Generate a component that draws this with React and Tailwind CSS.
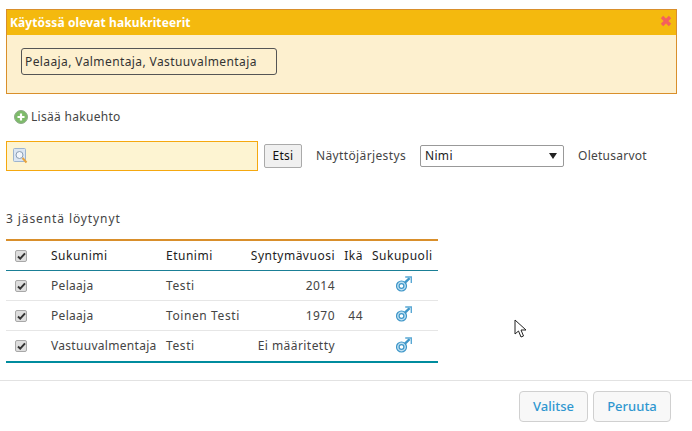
import React from "react";

const rows = [
  { last: "Pelaaja", first: "Testi", year: "2014", age: "" },
  { last: "Pelaaja", first: "Toinen Testi", year: "1970", age: "44" },
  { last: "Vastuuvalmentaja", first: "Testi", year: "Ei määritetty", age: "" },
];

const Check = () => (
  <span className="flex h-[12px] w-[12px] items-center justify-center rounded-[2px] border border-[#a8a8a8] bg-[#dedede]">
    <svg width="9" height="8" viewBox="0 0 9 8">
      <path d="M1 4.5 L3.2 6.6 L8 1.4" fill="none" stroke="#333" strokeWidth="2" />
    </svg>
  </span>
);

const Male = () => (
  <svg width="16" height="16" viewBox="0 0 16 16" fill="none">
    <circle cx="5.5" cy="10" r="5" fill="#bfe0f2" stroke="#3f97c9" strokeWidth="1.2" />
    <circle cx="5.5" cy="10" r="2.4" fill="#fff" stroke="#3f97c9" strokeWidth="1.2" />
    <path d="M9 6.6 L13.6 2.2" stroke="#3f97c9" strokeWidth="2.4" />
    <path d="M9.2 1 H15.4 V7" stroke="#5aa8d4" strokeWidth="1.6" />
  </svg>
);

const App = () => {
  return (
    <div className="relative h-[431px] w-[692px] overflow-hidden bg-white font-['Noto_Sans',sans-serif] text-[12px] text-[#444]">
      <div className="ml-[6px] mt-[9px] h-[85px] w-[671px] border border-[#d98f2b] bg-[#fdf0cf]">
        <div className="flex h-[25px] items-center justify-between bg-[#f4b90e] pl-[3px] pr-[4px]">
          <span className="text-[12px] font-bold tracking-[0.1px] text-white">Käytössä olevat hakukriteerit</span>
          <svg width="12" height="12" viewBox="0 0 12 12" className="mb-[3px]">
            <path d="M2 2 L10 10 M10 2 L2 10" stroke="#f4605c" strokeWidth="3.4" />
          </svg>
        </div>
        <div className="ml-[14px] mt-[13px] flex h-[27px] w-[256px] items-center rounded-[3px] border border-[#555] px-[3px] tracking-[0.4px] text-[#333]">
          Pelaaja, Valmentaja, Vastuuvalmentaja
        </div>
      </div>

      <div className="ml-[14px] mt-[14px] flex h-[18px] items-center gap-[3px] tracking-[0.3px]">
        <svg width="14" height="14" viewBox="0 0 14 14">
          <circle cx="7" cy="7" r="6.5" fill="#7dbb6a" stroke="#8fa98a" />
          <path d="M7 3.5 V10.5 M3.5 7 H10.5" stroke="#fff" strokeWidth="2.2" />
        </svg>
        <span>Lisää hakuehto</span>
      </div>

      <div className="ml-[6px] mt-[15px] flex h-[30px] items-center">
        <div className="flex h-[30px] w-[252px] items-center border border-[#f5a80f] bg-[#fdf4d2] pl-[6px]">
          <svg width="15" height="16" viewBox="0 0 15 16">
            <rect x="0.5" y="0.5" width="12" height="13" rx="1" fill="#dbe6f3" stroke="#9db4cf" />
            <circle cx="6.5" cy="7" r="3.5" fill="#f2f6fb" stroke="#8a9db3" />
            <path d="M9.5 10 L13.5 14.5" stroke="#e8a33d" strokeWidth="2" />
          </svg>
        </div>
        <button className="ml-[6px] h-[24px] w-[38px] rounded-[2px] border border-[#aaa] bg-[#f0f0f0] text-[12px] tracking-[0.3px] text-[#111]">
          Etsi
        </button>
        <span className="ml-[14px] tracking-[0.37px]">Näyttöjärjestys</span>
        <div className="ml-[14px] flex h-[22px] w-[144px] items-center justify-between rounded-[2px] border border-[#999] pl-[4px] pr-[6px] tracking-[0.3px] text-[#222]">
          <span>Nimi</span>
          <span className="h-0 w-0 border-x-[4px] border-t-[6px] border-x-transparent border-t-[#222]"></span>
        </div>
        <span className="ml-[14px] tracking-[0.25px]">Oletusarvot</span>
      </div>

      <div className="ml-[6px] mt-[39px] h-[18px] leading-[18px] tracking-[0.9px]">3 jäsentä löytynyt</div>

      <div className="ml-[6px] mt-[11px] w-[432px]">
        <div className="flex h-[31px] items-center border-t-2 border-[#d98f2b] tracking-[0.5px] text-[#222]">
          <div className="flex w-[45px] pl-[9px]"><Check /></div>
          <div className="w-[115px]">Sukunimi</div>
          <div className="w-[84px]">Etunimi</div>
          <div className="w-[85px] text-right">Syntymävuosi</div>
          <div className="w-[28px] text-right">Ikä</div>
          <div className="w-[70px] pl-[9px]">Sukupuoli</div>
        </div>
        <div className="border-t border-[#1a7f96]">
          {rows.map((r, i) => (
            <div
              key={i}
              className={`flex h-[30px] items-center ${i < 2 ? "border-b border-[#e6e6e6]" : ""}`}
            >
              <div className="flex w-[45px] pl-[9px]"><Check /></div>
              <div className="w-[115px] tracking-[0.3px]">{r.last}</div>
              <div className="w-[84px] tracking-[0.6px]">{r.first}</div>
              <div className="w-[85px] text-right tracking-[0.45px]">{r.year}</div>
              <div className="w-[28px] text-right tracking-[0.5px]">{r.age}</div>
              <div className="flex w-[70px] pb-[3px] pl-[33px]"><Male /></div>
            </div>
          ))}
        </div>
        <div className="h-[2px] bg-[#008c9e]"></div>
      </div>

      <div className="mt-[17px] flex h-[51px] justify-end gap-[5px] border-t border-[#e2e2e2] pr-[21px] pt-[10px]">
        <button className="h-[31px] w-[69px] rounded-[4px] border border-[#d0d0d0] bg-[#f8f8f8] text-[13px] font-medium text-[#2f97d0]">
          Valitse
        </button>
        <button className="h-[31px] w-[78px] rounded-[4px] border border-[#d0d0d0] bg-[#f8f8f8] text-[13px] font-medium text-[#2f97d0]">
          Peruuta
        </button>
      </div>

      {/* mouse pointer in the screenshot */}
      <svg className="absolute left-[514px] top-[319px]" width="14" height="20" viewBox="0 0 14 20">
        <path d="M1 1 V15 L4.5 12 L7 18 L9.5 17 L7 11 H12 Z" fill="#fff" stroke="#222" strokeWidth="1" />
      </svg>
    </div>
  );
};

export default App;
